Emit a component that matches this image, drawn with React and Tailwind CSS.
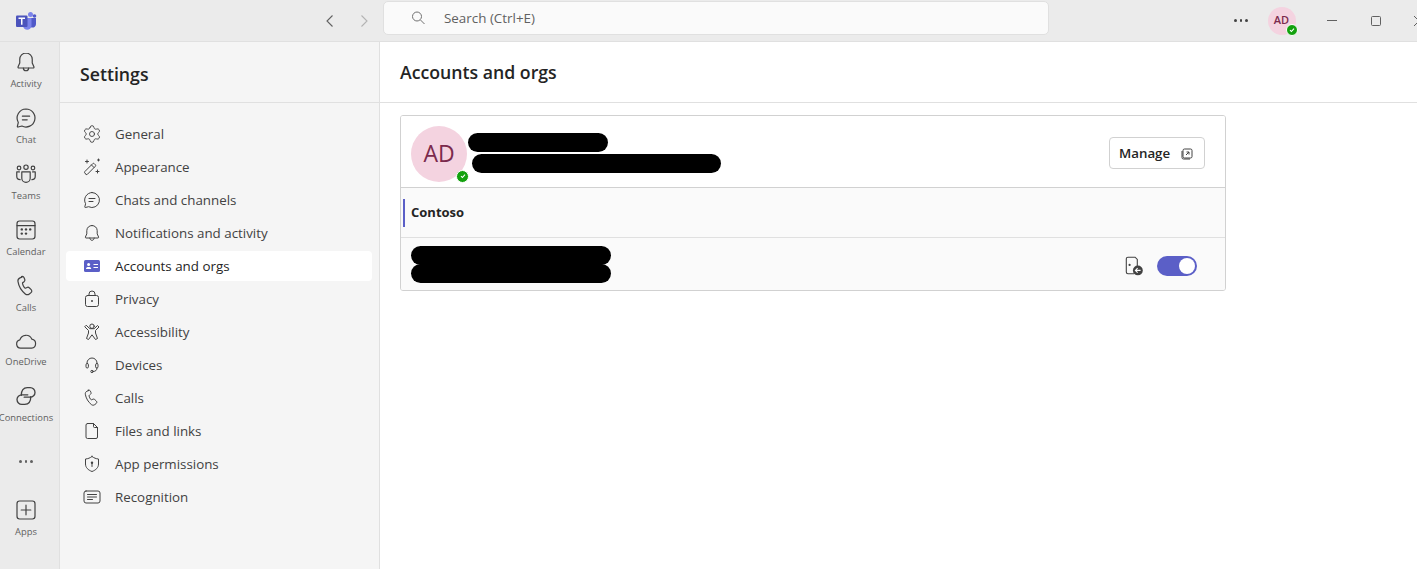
import React from "react";
import { Settings } from "lucide-react";

const S = ({ size = 20, children, sw = 1, className = "", vb = 20 }) => (
  <svg width={size} height={size} viewBox={`0 0 ${vb} ${vb}`} fill="none" stroke="currentColor" strokeWidth={sw} strokeLinecap="round" strokeLinejoin="round" className={className}>
    {children}
  </svg>
);

const Bell = (p) => (
  <S {...p}>
    <path d="M10 2.500c-3 0-5.200 2.300-5.200 5.200v3.200L3.400 14c-.2.500.1 1 .6 1h12c.5 0 .8-.5.6-1l-1.400-3.100V7.700c0-2.900-2.200-5.200-5.200-5.200Z" />
    <path d="M7.800 15c0 1.300 1 2.300 2.200 2.300s2.200-1 2.200-2.300" />
  </S>
);
const Chat = (p) => (
  <S {...p}>
    <path d="M10 2.500a7.500 7.500 0 1 1-3.400 14.200l-3.200.8c-.4.100-.7-.2-.6-.6l.8-3.200A7.500 7.500 0 0 1 10 2.500Z" />
    <path d="M7 8.500h6M7 11.500h4" />
  </S>
);
const Teams = (p) => (
  <S {...p}>
    <circle cx="10" cy="4.300" r="1.800" />
    <circle cx="4.200" cy="5" r="1.500" />
    <circle cx="15.800" cy="5" r="1.500" />
    <path d="M6.500 8.300h7v5.200a3.500 3.500 0 0 1-7 0V8.300Z" />
    <path d="M4.500 8.300H2.300v3.600c0 1.600 1.200 2.800 2.800 2.800M15.500 8.300h2.200v3.600c0 1.600-1.200 2.800-2.800 2.800" />
  </S>
);
const Calendar = (p) => (
  <S {...p}>
    <rect x="2.500" y="2.500" width="15" height="15" rx="2.200" />
    <path d="M2.500 6.300h15" />
    <g fill="currentColor" stroke="none">
      <circle cx="6.500" cy="9.500" r="1" />
      <circle cx="10" cy="9.500" r="1" />
      <circle cx="13.500" cy="9.500" r="1" />
      <circle cx="6.500" cy="13" r="1" />
      <circle cx="10" cy="13" r="1" />
    </g>
  </S>
);
const Call = (p) => (
  <S {...p}>
    <path d="M6.600 2.600 5 3.200c-1.200.5-1.900 1.700-1.700 3 .6 3.900 3 7.900 6.100 10.400 1 .8 2.400.8 3.400 0l1.400-1.100c.8-.6.8-1.800.1-2.500l-1.600-1.500c-.5-.5-1.200-.6-1.800-.3l-1 .5c-.4.200-.9.100-1.200-.3-.8-1-1.300-2-1.600-3.300-.1-.4.100-.9.500-1.100l.8-.6c.6-.4.800-1.100.6-1.800l-.6-1.500c-.3-.8-1.400-1.300-2.200-1Z" />
  </S>
);
const Cloud = (p) => (
  <S {...p}>
    <path d="M5.500 16a3.500 3.500 0 0 1-.6-6.900 5.300 5.300 0 0 1 10-.6 3.800 3.800 0 0 1-.2 7.500H5.500Z" />
  </S>
);
const Connections = (p) => (
  <S {...p} sw={1.100}>
    <path d="M6 9.500C6 5.500 8 3 11 3h2.500a4 4 0 0 1 0 8H8.500" />
    <path d="M14 10.500c0 4-2 6.500-5 6.500H6.500a4 4 0 0 1 0-8h5" />
  </S>
);
const PlusBox = (p) => (
  <S {...p}>
    <rect x="2.500" y="2.500" width="15" height="15" rx="2.200" />
    <path d="M10 6v8M6 10h8" />
  </S>
);
const Gear = ({ size }) => <Settings size={size} strokeWidth={1.1} />;
const Wand = (p) => (
  <S {...p}>
    <path d="M4 17.300 2.800 16c-.4-.4-.4-1 0-1.400l8-8c.4-.4 1-.4 1.400 0l1.200 1.200c.4.400.4 1 0 1.400l-8 8.100c-.4.400-1 .4-1.400 0ZM9.500 8l2.500 2.500" />
    <path d="M5 3v3M3.500 4.500h3M16.500 2v2M15.500 3h2M15.500 13v3M14 14.500h3" />
  </S>
);
const Card = () => (
  <svg width={20} height={20} viewBox="0 0 20 20">
    <rect x="2" y="4" width="16" height="12" rx="1.500" fill="#5b5fc7" />
    <circle cx="6.600" cy="8.400" r="1.500" fill="#fff" />
    <path d="M4 13c0-1.500 1-2 2.600-2s2.600.5 2.600 2H4Z" fill="#fff" />
    <path d="M11.500 8.500h4.500M11.500 11.500h4.500" stroke="#fff" strokeWidth="1.200" />
  </svg>
);
const Lock = (p) => (
  <S {...p}>
    <path d="M7 6.500V5a3 3 0 0 1 6 0v1.500" />
    <rect x="3.500" y="6.500" width="13" height="11" rx="2" />
    <circle cx="10" cy="12" r="1" fill="currentColor" stroke="none" />
  </S>
);
const Person = (p) => (
  <S {...p}>
    <circle cx="10" cy="4.200" r="2.200" />
    <path d="M4.500 3.500 7.800 6.700h4.400l3.300-3.200L17 5l-3.500 3.500V11l2 5.500-2 1L10 12.800l-3.500 4.700-2-1 2-5.500V8.500L3 5Z" />
  </S>
);
const Headset = (p) => (
  <S {...p}>
    <path d="M5 8.500V8a5 5 0 0 1 10 0v.5" />
    <rect x="4" y="8.500" width="2.400" height="4.500" rx="1.200" />
    <rect x="13.600" y="8.500" width="2.400" height="4.500" rx="1.200" />
    <path d="M15 13c0 2.300-1.500 3.500-3.800 3.500" />
    <circle cx="10" cy="16.500" r="1.200" />
  </S>
);
const FileI = (p) => (
  <S {...p}>
    <path d="M5.500 2.500h6l4 4v9.500a1.500 1.500 0 0 1-1.500 1.500H5.500A1.500 1.500 0 0 1 4 16V4a1.500 1.500 0 0 1 1.500-1.500Z" />
    <path d="M11.500 2.500v3a1 1 0 0 0 1 1h3" />
  </S>
);
const Shield = (p) => (
  <S {...p}>
    <path d="M10 2.500c2 1.500 4 2.300 6.500 2.500v5c0 3.500-2.500 6-6.500 7.500C6 16 3.500 13.500 3.500 10V5C6 4.800 8 4 10 2.500Z" />
    <circle cx="10" cy="8.700" r="1.200" fill="currentColor" stroke="none" />
    <path d="M10 9.500v3" />
  </S>
);
const Recog = (p) => (
  <S {...p}>
    <rect x="2" y="4" width="16" height="12" rx="2" />
    <path d="M5.500 7.500h9M5.500 10h9M5.500 12.500h5" />
  </S>
);

const rail = [
  ["Activity", Bell, "h-[56px]", "mt-[3px]"],
  ["Chat", Chat, "h-[56px]", "mt-[3px]"],
  ["Teams", Teams, "h-[56px]", "mt-[3px]"],
  ["Calendar", Calendar, "h-[56px]", "mt-[3px]"],
  ["Calls", Call, "h-[55px]", "mt-[3px]"],
  ["OneDrive", Cloud, "h-[55px]", "mt-[2px]"],
  ["Connections", Connections, "h-[56px]", "mt-[3px]"],
];

const menu = [
  ["General", Gear],
  ["Appearance", Wand],
  ["Chats and channels", Chat],
  ["Notifications and activity", Bell],
  ["Accounts and orgs", Card, true],
  ["Privacy", Lock],
  ["Accessibility", Person],
  ["Devices", Headset],
  ["Calls", Call],
  ["Files and links", FileI],
  ["App permissions", Shield],
  ["Recognition", Recog],
];

const Dot = ({ className = "" }) => (
  <span className={`flex items-center justify-center rounded-full bg-[#13a10e] border border-white ${className}`}>
    <svg width="6" height="6" viewBox="0 0 6 6" fill="none" stroke="#fff" strokeWidth="1.100">
      <path d="M1 3.200 2.400 4.500 5 1.600" />
    </svg>
  </span>
);

const Dots = ({ className = "" }) => (
  <span className={`flex items-center gap-[3px] ${className}`}>
    <i className="w-[2.500px] h-[2.500px] rounded-full bg-current" />
    <i className="w-[2.500px] h-[2.500px] rounded-full bg-current" />
    <i className="w-[2.500px] h-[2.500px] rounded-full bg-current" />
  </span>
);

export default function App() {
  return (
    <div className="w-[1417px] h-[569px] overflow-hidden flex flex-col bg-white text-[#424242] font-['Open_Sans','Noto_Sans',sans-serif]">
      {/* Title bar */}
      <header className="h-[42px] shrink-0 bg-[#ebebeb] border-b border-[#e0e0e0] flex items-center">
        <div className="w-[322px] pl-[15px] shrink-0 flex items-center">
          <svg width="22" height="20" viewBox="0 0 22 20">
            <circle cx="15.500" cy="3.500" r="2.500" fill="#7b83eb" />
            <circle cx="19.500" cy="5" r="1.800" fill="#5059c9" />
            <path d="M13 7h8v6a3.500 3.500 0 0 1-4 3.500A4 4 0 0 1 13 13V7Z" fill="#5059c9" />
            <path d="M8 7h8.500v7.500a4.200 4.200 0 0 1-8.500 0V7Z" fill="#7b83eb" />
            <rect x="1" y="4.500" width="11.500" height="11.500" rx="1" fill="#4b53bc" />
            <path d="M3.500 7.200h6.500M6.750 7.200v6.500" stroke="#fff" strokeWidth="1.500" />
          </svg>
        </div>
        <div className="flex items-center gap-[18px] text-[#616161]">
          <svg width="16" height="16" viewBox="0 0 16 16" fill="none" stroke="currentColor" strokeWidth="1.100"><path d="M10.500 2.500 5 8l5.500 5.500" /></svg>
          <svg width="16" height="16" viewBox="0 0 16 16" fill="none" stroke="#b3b3b3" strokeWidth="1.100"><path d="M5.500 2.500 11 8l-5.500 5.500" /></svg>
        </div>
        <div className="ml-[11px] w-[666px] h-[34px] shrink-0 -mt-[5px] bg-[#fafafa] border border-[#e0e0e0] rounded-[5px] flex items-center pl-[25px] text-[#616161]">
          <svg width="18" height="18" viewBox="0 0 18 18" fill="none" stroke="#707070" strokeWidth="1"><circle cx="8" cy="7.500" r="4.500" /><path d="m11.500 11 4 4" /></svg>
          <span className="ml-[17px] mt-[2px] text-[13.400px] leading-none">Search (Ctrl+E)</span>
        </div>
        <Dots className="ml-[185px] text-[#424242]" />
        <div className="relative ml-[20px] w-[28px] h-[28px] shrink-0 rounded-full bg-[#f4d3e0] flex items-center justify-center text-[11px] font-semibold text-[#7b2a4d]">
          AD
          <Dot className="absolute right-[-2px] bottom-[-1px] w-[12px] h-[12px]" />
        </div>
        <div className="ml-[31px] w-[10px] h-px shrink-0 bg-[#616161]" />
        <div className="ml-[34px] w-[10px] h-[10px] shrink-0 border border-[#616161] rounded-[1.500px]" />
        <svg className="ml-[32px] shrink-0" width="8" height="12" viewBox="0 0 8 12" fill="none" stroke="#616161"><path d="M1 1l6 6M1 11l6-6" /></svg>
      </header>

      <div className="flex-1 flex min-h-0">
        {/* Rail */}
        <nav className="w-[60px] shrink-0 bg-[#ebebeb] border-r border-[#e0e0e0] flex flex-col items-center pt-[8px] pr-[7px]">
          {rail.map(([label, I, h, m]) => (
            <div key={label} className={`${h} w-full flex flex-col items-center shrink-0 whitespace-nowrap`}>
              <I size={24} className="text-[#424242]" />
              <span className={`${m} text-[9.400px] leading-[13px] text-[#616161]`}>{label}</span>
            </div>
          ))}
          <Dots className="mt-[20px] text-[#616161]" />
          <PlusBox size={24} className="mt-[35px] text-[#424242]" />
          <span className="mt-[3px] text-[9.400px] leading-[13px] text-[#616161]">Apps</span>
        </nav>

        {/* Settings */}
        <aside className="w-[320px] shrink-0 bg-[#f5f5f5] border-r border-[#e0e0e0] flex flex-col">
          <div className="h-[61px] shrink-0 border-b border-[#e0e0e0] pl-[20px] pt-[5px] flex items-center text-[17.700px] font-semibold text-[#242424]">Settings</div>
          <ul className="pt-[16px] pl-[6px] pr-[7px] flex flex-col gap-[3px]">
            {menu.map(([label, I, active]) => (
              <li key={label} className={`h-[30px] flex items-center pl-[16px] rounded-[4px] text-[13.350px] ${active ? "bg-white text-[#242424]" : "text-[#424242]"}`}>
                <I size={20} />
                <span className="ml-[13px] whitespace-nowrap">{label}</span>
              </li>
            ))}
          </ul>
        </aside>

        {/* Main */}
        <main className="flex-1 min-w-0">
          <div className="h-[61px] border-b border-[#e0e0e0] pl-[20px] flex items-center text-[17.700px] font-semibold text-[#242424]">Accounts and orgs</div>
          <section className="ml-[20px] mt-[12px] w-[826px] h-[176px] border border-[#d1d1d1] rounded-[3px] flex flex-col overflow-hidden">
            <div className="h-[72px] shrink-0 border-b border-[#d1d1d1] bg-white flex items-center pl-[10px] pr-[20px] pt-[2px]">
              <div className="relative mt-[2px] w-[56px] h-[56px] rounded-full bg-[#f4d3e0] flex items-center justify-center text-[23px] font-medium text-[#7b2a4d]">
                AD
                <Dot className="absolute right-[-2px] bottom-[-1px] w-[13px] h-[13px]" />
              </div>
              <div className="ml-[1px] flex flex-col gap-[2px]">
                <div className="w-[140px] h-[19px] rounded-full bg-black" />
                <div className="ml-[4px] w-[249px] h-[19px] rounded-full bg-black" />
              </div>
              <button className="ml-auto w-[96px] h-[32px] rounded-[4px] border border-[#d1d1d1] bg-white flex items-center pl-[9px] pt-[2px] text-[13.300px] font-semibold text-[#242424]">
                Manage
                <svg className="ml-[11px]" width="12" height="12" viewBox="0 0 12 12" fill="none" stroke="#424242" strokeWidth="1"><rect x="2" y="1" width="9" height="9" rx="1.500" /><path d="M1 3v6.500A1.500 1.500 0 0 0 2.500 11H9M5 7l3-3M5.500 4H8v2.500" /></svg>
              </button>
            </div>
            <div className="h-[50px] shrink-0 border-b border-[#e0e0e0] bg-[#fafafa] flex items-center pl-[2px]">
              <div className="w-[2px] h-[28px] bg-[#5b5fc7]" />
              <span className="ml-[6px] text-[13px] font-bold text-[#242424]">Contoso</span>
            </div>
            <div className="flex-1 bg-[#fafafa] flex items-center pl-[10px] pr-[28px]">
              <div className="flex flex-col -space-y-[1px]">
                <div className="w-[200px] h-[19px] rounded-full bg-black" />
                <div className="w-[200px] h-[19px] rounded-full bg-black" />
              </div>
              <svg className="ml-auto mt-[4px]" width="20" height="22" viewBox="0 0 18 20" fill="none" stroke="#424242" strokeWidth="1">
                <path d="M9 17H3.500A1.500 1.500 0 0 1 2 15.500v-12A1.500 1.500 0 0 1 3.500 2H10l2 2v6" />
                <circle cx="5" cy="9" r="1" fill="#424242" stroke="none" />
                <circle cx="12.500" cy="14" r="4.500" fill="#424242" stroke="none" />
                <path d="M15 14h-4.500M12.300 12l-2 2 2 2" stroke="#fff" />
              </svg>
              <div className="ml-[13px] mt-[4px] w-[40px] h-[20px] rounded-full bg-[#5b5fc7] flex items-center justify-end pr-[2px]">
                <div className="w-[16px] h-[16px] rounded-full bg-white" />
              </div>
            </div>
          </section>
        </main>
      </div>
    </div>
  );
}
